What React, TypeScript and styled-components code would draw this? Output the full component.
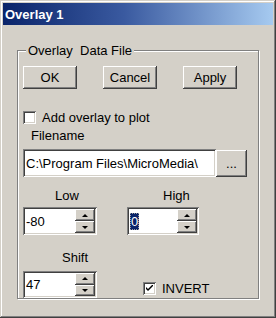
import React from "react";
import styled, { createGlobalStyle } from "styled-components";

const face = "#d4d0c8";

const Global = createGlobalStyle`
  html, body { margin: 0; padding: 0; background: #fff; }
  body { font-family: "Liberation Sans", Arial, sans-serif; font-size: 13px; }
`;

const Window = styled.div`
  width: 276px;
  height: 318px;
  box-sizing: border-box;
  padding: 3px;
  background: ${face};
  box-shadow: inset -1px -1px #404040, inset 1px 1px ${face}, inset -2px -2px #808080, inset 2px 2px #fff;
  display: flex;
  flex-direction: column;
`;

const TitleBar = styled.div`
  height: 22px;
  flex: none;
  padding-left: 2px;
  display: flex;
  align-items: center;
  background: linear-gradient(90deg, #0a246a 0%, #3a5aa0 45%, #a6caf0 100%);
  color: #fff;
  font-weight: bold;
  font-size: 13px;
`;

const Group = styled.fieldset`
  margin: 18px 0 0 14px;
  width: 242px;
  height: 256px;
  box-sizing: border-box;
  border: 1px solid #808080;
  box-shadow: inset 1px 1px #fff, 1px 1px #fff;
  padding: 0 0 0 5px;
  min-inline-size: 0;
`;

const Legend = styled.legend`
  margin-left: 3px;
  padding: 0 2px;
  line-height: 15px;
  background: ${face};
  white-space: pre;
`;

const Row = styled.div<{ $top: number; $gap?: number; $indent?: number }>`
  display: flex;
  align-items: center;
  margin-top: ${(p) => p.$top}px;
  gap: ${(p) => p.$gap ?? 0}px;
  padding-left: ${(p) => p.$indent ?? 0}px;
  line-height: 15px;
`;

const Button = styled.button<{ $w: number; $h: number }>`
  width: ${(p) => p.$w}px;
  height: ${(p) => p.$h}px;
  padding: 0;
  border: none;
  background: ${face};
  font: inherit;
  color: #000;
  box-shadow: inset -1px -1px #404040, inset 1px 1px #fff, inset -2px -2px #808080;
`;

const Check = styled.span`
  width: 13px;
  height: 13px;
  box-sizing: border-box;
  background: #fff;
  box-shadow: inset 1px 1px #808080, inset -1px -1px #fff, inset 2px 2px #404040, inset -2px -2px ${face};
  display: inline-flex;
  align-items: center;
  justify-content: center;
  flex: none;
`;

const CheckLabel = styled.span`
  margin-left: 6px;
`;

const Label = styled.div<{ $w?: number; $indent: number }>`
  width: ${(p) => (p.$w ? `${p.$w}px` : "auto")};
  padding-left: ${(p) => p.$indent}px;
  box-sizing: border-box;
  line-height: 15px;
`;

const Sunken = styled.div<{ $w: number; $h: number }>`
  width: ${(p) => p.$w}px;
  height: ${(p) => p.$h}px;
  box-sizing: border-box;
  padding: 2px;
  background: #fff;
  box-shadow: inset 1px 1px #808080, inset -1px -1px #fff, inset 2px 2px #404040, inset -2px -2px ${face};
  display: flex;
  flex: none;
`;

const Field = styled.div`
  flex: 1;
  padding-left: 1px;
  display: flex;
  align-items: center;
  white-space: nowrap;
  overflow: hidden;
`;

const Selected = styled.span`
  display: inline-block;
  height: 17px;
  line-height: 17px;
  padding: 0 1px;
  background: #0a246a;
  color: #fff;
  outline: 1px dotted #a0a0a0;
  outline-offset: -1px;
`;

const Spinner = styled.div`
  width: 20px;
  display: flex;
  flex-direction: column;
`;

const SpinButton = styled.div`
  flex: 1;
  background: ${face};
  box-shadow: inset -1px -1px #404040, inset 1px 1px #fff, inset -2px -2px #808080;
  display: flex;
  align-items: center;
  justify-content: center;
`;

const Arrow = styled.span<{ $down?: boolean }>`
  width: 0;
  height: 0;
  border-left: 3px solid transparent;
  border-right: 3px solid transparent;
  ${(p) => (p.$down ? "border-top: 3px solid #000;" : "border-bottom: 3px solid #000;")}
`;

const Spin = ({ w, h, children }: { w: number; h: number; children: React.ReactNode }) => (
  <Sunken $w={w} $h={h}>
    <Field>{children}</Field>
    <Spinner>
      <SpinButton><Arrow /></SpinButton>
      <SpinButton><Arrow $down /></SpinButton>
    </Spinner>
  </Sunken>
);

const Column = styled.div<{ $w: number }>`
  width: ${(p) => p.$w}px;
  flex: none;
`;

const App = () => {
  return (
    <>
      <Global />
      <Window>
        <TitleBar>Overlay 1</TitleBar>
        <Group>
          <Legend>{"Overlay  Data File"}</Legend>
          <Row $top={8} $gap={26}>
            <Button $w={54} $h={23}>OK</Button>
            <Button $w={54} $h={23}>Cancel</Button>
            <Button $w={54} $h={23}>Apply</Button>
          </Row>
          <Row $top={21}>
            <Check />
            <CheckLabel>Add overlay to plot</CheckLabel>
          </Row>
          <Row $top={3}>
            <Label $indent={8}>Filename</Label>
          </Row>
          <Row $top={6}>
            <Sunken $w={193} $h={28}>
              <Field>C:\Program Files\MicroMedia\</Field>
            </Sunken>
            <Button $w={31} $h={27}>...</Button>
          </Row>
          <Row $top={11}>
            <Label $w={104} $indent={32}>Low</Label>
            <Label $indent={36}>High</Label>
          </Row>
          <Row $top={4}>
            <Column $w={104}>
              <Spin w={74} h={28}>-80</Spin>
            </Column>
            <Spin w={72} h={28}><Selected>0</Selected></Spin>
          </Row>
          <Row $top={15}>
            <Label $indent={39}>Shift</Label>
          </Row>
          <Row $top={6}>
            <Column $w={104}>
              <Spin w={74} h={27}>47</Spin>
            </Column>
            <Row $top={8} $indent={16}>
              <Check>
                <svg width="7" height="7" viewBox="0 0 7 7">
                  <path d="M0 2 L0 4 L2 6 L7 1 L7 0 L6 0 L2 4 L1 3 Z" fill="#000" />
                </svg>
              </Check>
              <CheckLabel>INVERT</CheckLabel>
            </Row>
          </Row>
        </Group>
      </Window>
    </>
  );
};

export default App;
